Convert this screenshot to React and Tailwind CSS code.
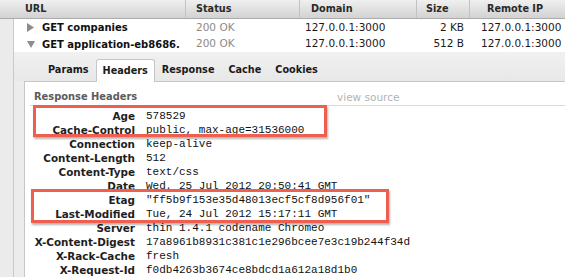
import React from "react";

const headers = [
  ["Age", "578529"],
  ["Cache-Control", "public, max-age=31536000"],
  ["Connection", "keep-alive"],
  ["Content-Length", "512"],
  ["Content-Type", "text/css"],
  ["Date", "Wed, 25 Jul 2012 20:50:41 GMT"],
  ["Etag", "\"ff5b9f153e35d48013ecf5cf8d956f01\""],
  ["Last-Modified", "Tue, 24 Jul 2012 15:17:11 GMT"],
  ["Server", "thin 1.4.1 codename Chromeo"],
  ["X-Content-Digest", "17a8961b8931c381c1e296bcee7e3c19b244f34d"],
  ["X-Rack-Cache", "fresh"],
  ["X-Request-Id", "f0db4263b3674ce8bdcd1a612a18d1b0"],
];

const tabs = ["Params", "Headers", "Response", "Cache", "Cookies"];

function TriRight() {
  return (
    <svg width="7" height="9" viewBox="0 0 7 9" className="shrink-0">
      <polygon points="0,0 7,4.5 0,9" fill="#8c8c8c" />
    </svg>
  );
}

function TriDown() {
  return (
    <svg width="8" height="7" viewBox="0 0 8 7" className="shrink-0">
      <polygon points="0,0 8,0 4,7" fill="#8c8c8c" />
    </svg>
  );
}

function Row({ open, name, size, h }) {
  return (
    <div className={`grid grid-cols-[171px_114px_117px_53px_1fr] items-center bg-white ${h}`}>
      <div className="flex items-center pl-[13px] overflow-hidden whitespace-nowrap">
        <div className="w-[8px] flex justify-start">{open ? <TriDown /> : <TriRight />}</div>
        <span className="ml-[7px] text-[10px] font-bold text-[#111]">{name}</span>
      </div>
      <div className="pl-[11px] text-[10.5px] text-[#8a8a8a]">200 OK</div>
      <div className="pl-[6px] text-[10.5px] text-[#1a1a1a]">127.0.0.1:3000</div>
      <div className="pr-[5px] text-right text-[10.5px] text-[#1a1a1a] whitespace-nowrap">{size}</div>
      <div className="pl-[12px] text-[10.5px] text-[#1a1a1a] whitespace-nowrap">127.0.0.1:3000</div>
    </div>
  );
}

export default function App() {
  return (
    <div className="relative w-[565px] h-[277px] overflow-hidden bg-white font-['DejaVu_Sans',sans-serif] flex flex-col">
      {/* column header */}
      <div className="grid grid-cols-[185px_114px_117px_53px_1fr] h-[19px] shrink-0 border-b border-[#ababab] bg-linear-to-b from-[#f0f0f0] to-[#d2d2d2] text-[9.7px] font-bold text-[#2a2a2a] leading-[18px] whitespace-nowrap">
        <div className="pl-[25px]">URL</div>
        <div className="pl-[10px] border-l border-[#c2c2c2]">Status</div>
        <div className="pl-[11px] border-l border-[#c2c2c2]">Domain</div>
        <div className="pl-[9px] border-l border-[#c2c2c2]">Size</div>
        <div className="pl-[17px] border-l border-[#c2c2c2]">Remote IP</div>
      </div>

      <div className="flex flex-1 min-h-0">
        {/* gutter */}
        <div className="w-[14px] shrink-0 bg-[#ebebeb] border-r border-[#c9c9c9]" />

        <div className="flex-1 flex flex-col min-w-0">
          <Row open={false} name="GET companies" size="2 KB" h="h-[17px]" />
          <Row open={true} name="GET application-eb8686." size="512 B" h="h-[16px]" />

          {/* detail panel */}
          <div className="flex-1 flex flex-col bg-[#ececec]">
            <div className="relative z-10 h-[29px] shrink-0 flex items-end pl-[27px] bg-linear-to-b from-[#f1f1f1] to-[#e8e8e8]">
              {tabs.map((t) =>
                t === "Headers" ? (
                  <div
                    key={t}
                    className="h-[23px] mb-[-1px] px-[6px] bg-white border border-b-0 border-[#c6c6c6] rounded-t-[3px] text-[9.7px] font-bold text-[#1a1a1a] leading-[22px]"
                  >
                    {t}
                  </div>
                ) : (
                  <div
                    key={t}
                    className="h-[22px] px-[7px] text-[9.7px] font-bold text-[#1a1a1a] leading-[22px]"
                  >
                    {t}
                  </div>
                )
              )}
            </div>

            <div className="flex-1 ml-[10px] bg-white border-l border-t border-[#c6c6c6] flex flex-col">
              <div className="ml-[5px] h-[24px] pt-[8px] pl-[4px] flex border-b border-[#d9d9d9] leading-[14px] whitespace-nowrap">
                <span className="w-[303px] text-[9.9px] font-bold text-[#5c5c5c]">Response Headers</span>
                <span className="text-[10.5px] text-[#b4b4b4]">view source</span>
              </div>
              <div className="pt-[3px] flex flex-col">
                {headers.map(([k, v]) => (
                  <div key={k} className="flex h-[14px] leading-[14px] whitespace-nowrap">
                    <div className="w-[110px] shrink-0 text-right text-[10.4px] font-bold text-[#1e1e1e]">{k}</div>
                    <div className="pl-[11px] font-['Liberation_Mono',monospace] text-[11px] text-[#111]">{v}</div>
                  </div>
                ))}
              </div>
            </div>
          </div>
        </div>
      </div>

      {/* annotation boxes */}
      <div className="absolute left-[33px] top-[105px] w-[294px] h-[32px] border-[3px] border-[#ef5f4f] shadow-[1px_2px_2px_rgba(0,0,0,0.3)]" />
      <div className="absolute left-[31px] top-[189px] w-[358px] h-[34px] border-[3px] border-[#ef5f4f] shadow-[1px_2px_2px_rgba(0,0,0,0.3)]" />
    </div>
  );
}
